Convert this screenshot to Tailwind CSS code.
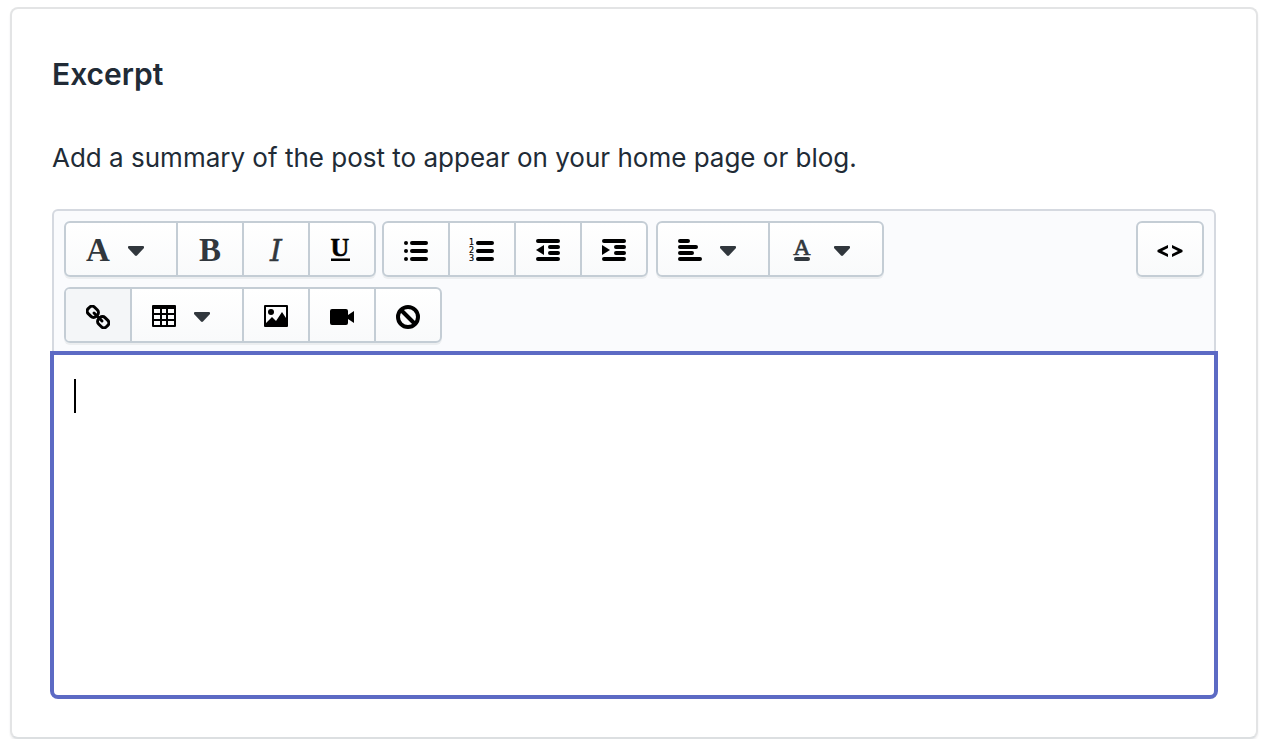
<!DOCTYPE html>
<html lang="en">
<head>
    <meta charset="UTF-8">
    <meta name="viewport" content="width=device-width, initial-scale=1.0">
    <title>Excerpt</title>
    <script src="https://cdn.jsdelivr.net/npm/@tailwindcss/browser@4"></script>
</head>
<body class="bg-white font-['Inter',sans-serif] text-[#212b36]">
    <section class="mx-2.5 mt-[7px] mr-2 rounded-lg border-2 border-[#e3e4e5] border-b-[#dcdfe1] bg-white px-10 pt-[45px] pb-9.5 shadow-[0_2px_2px_rgba(33,43,54,0.08)]">
        <h2 class="text-[30px] leading-10 font-semibold">Excerpt</h2>
        <label for="excerpt" class="mt-11 block text-[26px] leading-10">Add a summary of the post to appear on your home page or blog.</label>

        <div class="mt-[31px] rounded-t-md border-2 border-b-0 border-[#d5d9e0] bg-[#fafbfd] px-2.5 pt-2.5 pb-2">
            <!-- Row 1 -->
            <div class="flex">
                <div class="mr-1.5 flex h-14 divide-x-2 divide-[#c4cdd5] rounded-md border-2 border-[#c4cdd5] bg-linear-to-b from-white to-[#f9fafb] shadow-[0_2px_0_rgba(22,29,37,0.06)]">
                    <button type="button" aria-label="Formatting" class="flex w-28 items-center gap-[18px] pt-1 pl-5">
                        <svg class="size-6 overflow-visible" viewBox="0 0 24 24" fill="#31373d"><text x="12" y="22" text-anchor="middle" font-family="Liberation Serif, serif" font-size="33" font-weight="bold">A</text></svg>
                        <svg class="h-2.5 w-4" viewBox="0 0 16 10" fill="#31373d"><path d="M1 0h14q1 0 1 1v1L9 9.500q-1 .8-2 0L0 2V1q0-1 1-1z"/></svg>
                    </button>
                    <button type="button" aria-label="Bold" class="flex w-[66px] items-center justify-center pt-1">
                        <svg class="size-6 overflow-visible" viewBox="0 0 24 24" fill="#31373d"><text x="12" y="22" text-anchor="middle" font-family="Liberation Serif, serif" font-size="33" font-weight="bold">B</text></svg>
                    </button>
                    <button type="button" aria-label="Italic" class="flex w-[66px] items-center justify-center pt-1">
                        <svg class="size-6 overflow-visible" viewBox="0 0 24 24" fill="#31373d"><text x="12" y="22" text-anchor="middle" font-family="DejaVu Serif, serif" font-size="30" font-style="italic" stroke="#31373d" stroke-width=".5">I</text></svg>
                    </button>
                    <button type="button" aria-label="Underline" class="flex w-16 items-center justify-center pt-1">
                        <svg class="size-6 overflow-visible" viewBox="0 0 24 24"><text x="10" y="17" text-anchor="middle" font-family="Liberation Serif, serif" font-size="26" font-weight="bold" stroke="#000" stroke-width=".5">U</text><path d="M1 19.500h19V22H1z"/></svg>
                    </button>
                </div>
                <div class="mr-2 flex h-14 divide-x-2 divide-[#c4cdd5] rounded-md border-2 border-[#c4cdd5] bg-linear-to-b from-white to-[#f9fafb] shadow-[0_2px_0_rgba(22,29,37,0.06)]">
                    <button type="button" aria-label="Bulleted list" class="flex w-[66px] items-center justify-center pt-1">
                        <svg class="size-6" viewBox="0 0 24 24"><circle cx="2" cy="4" r="2"/><circle cx="2" cy="12" r="2"/><circle cx="2" cy="20" r="2"/><path d="M8 4h14M8 12h14M8 20h14" stroke="#000" stroke-width="4" stroke-linecap="round"/></svg>
                    </button>
                    <button type="button" aria-label="Numbered list" class="flex w-[66px] items-center justify-center pt-1">
                        <svg class="size-6 overflow-visible" viewBox="0 0 24 24"><g font-family="DejaVu Sans, sans-serif" font-size="8" stroke="#000" stroke-width=".2"><text x="-1" y="6">1</text><text x="-1" y="14">2</text><text x="-1" y="22">3</text></g><path d="M8 4h14M8 12h14M8 20h14" stroke="#000" stroke-width="4" stroke-linecap="round"/></svg>
                    </button>
                    <button type="button" aria-label="Outdent" class="flex w-[66px] items-center justify-center pt-1">
                        <svg class="size-6" viewBox="0 0 24 24"><path d="M2 2h20M14 8h8M14 14h8M2 20h20" stroke="#000" stroke-width="4" stroke-linecap="round"/><path d="M8 6v10L0 11z"/></svg>
                    </button>
                    <button type="button" aria-label="Indent" class="flex w-16 items-center justify-center pt-1">
                        <svg class="size-6" viewBox="0 0 24 24"><path d="M2 2h20M14 8h8M14 14h8M2 20h20" stroke="#000" stroke-width="4" stroke-linecap="round"/><path d="M0 6v10l8-5z"/></svg>
                    </button>
                </div>
                <div class="flex h-14 divide-x-2 divide-[#c4cdd5] rounded-md border-2 border-[#c4cdd5] bg-linear-to-b from-white to-[#f9fafb] shadow-[0_2px_0_rgba(22,29,37,0.06)]">
                    <button type="button" aria-label="Alignment" class="flex w-28 items-center gap-[18px] pt-1 pl-5">
                        <svg class="size-6" viewBox="0 0 24 24"><path d="M2 2h8M2 8h16M2 14h12M2 20h20" stroke="#000" stroke-width="4" stroke-linecap="round"/></svg>
                        <svg class="h-2.5 w-4" viewBox="0 0 16 10" fill="#31373d"><path d="M1 0h14q1 0 1 1v1L9 9.500q-1 .8-2 0L0 2V1q0-1 1-1z"/></svg>
                    </button>
                    <button type="button" aria-label="Color" class="flex w-28 items-center gap-5 pt-1 pl-5">
                        <svg class="size-6 overflow-visible" viewBox="0 0 24 24" fill="#31373d"><text x="12" y="16" text-anchor="middle" font-family="Liberation Serif, serif" font-size="24" stroke="#31373d" stroke-width=".7">A</text><path d="M6 20h12" stroke="#31373d" stroke-width="4" stroke-linecap="round"/></svg>
                        <svg class="h-2.5 w-4" viewBox="0 0 16 10" fill="#31373d"><path d="M1 0h14q1 0 1 1v1L9 9.500q-1 .8-2 0L0 2V1q0-1 1-1z"/></svg>
                    </button>
                </div>
                <button type="button" aria-label="Show HTML" class="ml-auto flex h-14 w-17 items-center justify-center rounded-md border-2 border-[#c4cdd5] bg-linear-to-b from-white to-[#f9fafb] pt-1 shadow-[0_2px_0_rgba(22,29,37,0.06)]">
                    <svg class="size-6 overflow-visible" viewBox="0 0 24 24"><path d="M-.5 11L10 6v3L4 12l6 3v3L-.5 13zM24.500 11L14 6v3l6 3-6 3v3l10.500-5z"/></svg>
                </button>
            </div>

            <!-- Row 2 -->
            <div class="mt-2.5 flex">
                <div class="flex h-14 divide-x-2 divide-[#c4cdd5] rounded-md border-2 border-[#c4cdd5] bg-linear-to-b from-white to-[#f9fafb] shadow-[0_2px_0_rgba(22,29,37,0.06)]">
                    <button type="button" aria-label="Insert link" class="flex w-[66px] items-center justify-center rounded-l-sm bg-[#f4f6f8] pt-1">
                        <svg class="size-6" viewBox="0 0 24 24" fill="none" stroke="#000" stroke-width="3"><rect x="-5.500" y="-4.500" width="11" height="9" rx="3.500" transform="translate(6.800 6.800) rotate(45)"/><rect x="-5.500" y="-4.500" width="11" height="9" rx="3.500" transform="translate(17.200 17.200) rotate(45)"/><path d="M8 8l8 8" stroke-linecap="round"/></svg>
                    </button>
                    <button type="button" aria-label="Insert table" class="flex w-28 items-center gap-[18px] pt-1 pl-5">
                        <svg class="size-6" viewBox="0 0 24 24"><path fill-rule="evenodd" d="M1 0h22q1 0 1 1v20q0 1-1 1H1q-1 0-1-1V1q0-1 1-1zM2 4v4h6V4zM10 4v4h4V4zM16 4v4h6V4zM2 10v4h6v-4zM10 10v4h4v-4zM16 10v4h6v-4zM2 16v4h6v-4zM10 16v4h4v-4zM16 16v4h6v-4z"/></svg>
                        <svg class="h-2.5 w-4" viewBox="0 0 16 10" fill="#31373d"><path d="M1 0h14q1 0 1 1v1L9 9.500q-1 .8-2 0L0 2V1q0-1 1-1z"/></svg>
                    </button>
                    <button type="button" aria-label="Insert image" class="flex w-[66px] items-center justify-center pt-1">
                        <svg class="size-6" viewBox="0 0 24 24"><path fill-rule="evenodd" d="M1 0h22q1 0 1 1v20q0 1-1 1H1q-1 0-1-1V1q0-1 1-1zM2 2v16l6-6 4 4 6-9 4 6V2z"/><circle cx="7" cy="7" r="3"/></svg>
                    </button>
                    <button type="button" aria-label="Insert video" class="flex w-[66px] items-center justify-center pt-1">
                        <svg class="size-6" viewBox="0 0 24 24"><path d="M2 4h14q2 0 2 2v4l6-4v12l-6-4v4q0 2-2 2H2q-2 0-2-2V6q0-2 2-2z"/></svg>
                    </button>
                    <button type="button" aria-label="Clear formatting" class="flex w-16 items-center justify-center pt-1">
                        <svg class="size-6" viewBox="0 0 24 24" fill="none" stroke="#000" stroke-width="4"><circle cx="12" cy="12" r="10"/><path d="M5 5l14 14"/></svg>
                    </button>
                </div>
            </div>
        </div>

        <div class="relative -mx-0.5">
            <textarea id="excerpt" class="block h-[348px] w-full resize-none rounded-b-lg border-4 border-[#5c6ac4] bg-white px-5 py-6 text-[26px] leading-9 outline-none"></textarea>
            <span class="absolute top-7 left-6 h-[34px] w-0.5 bg-black" aria-hidden="true"></span>
        </div>
    </section>
</body>
</html>
